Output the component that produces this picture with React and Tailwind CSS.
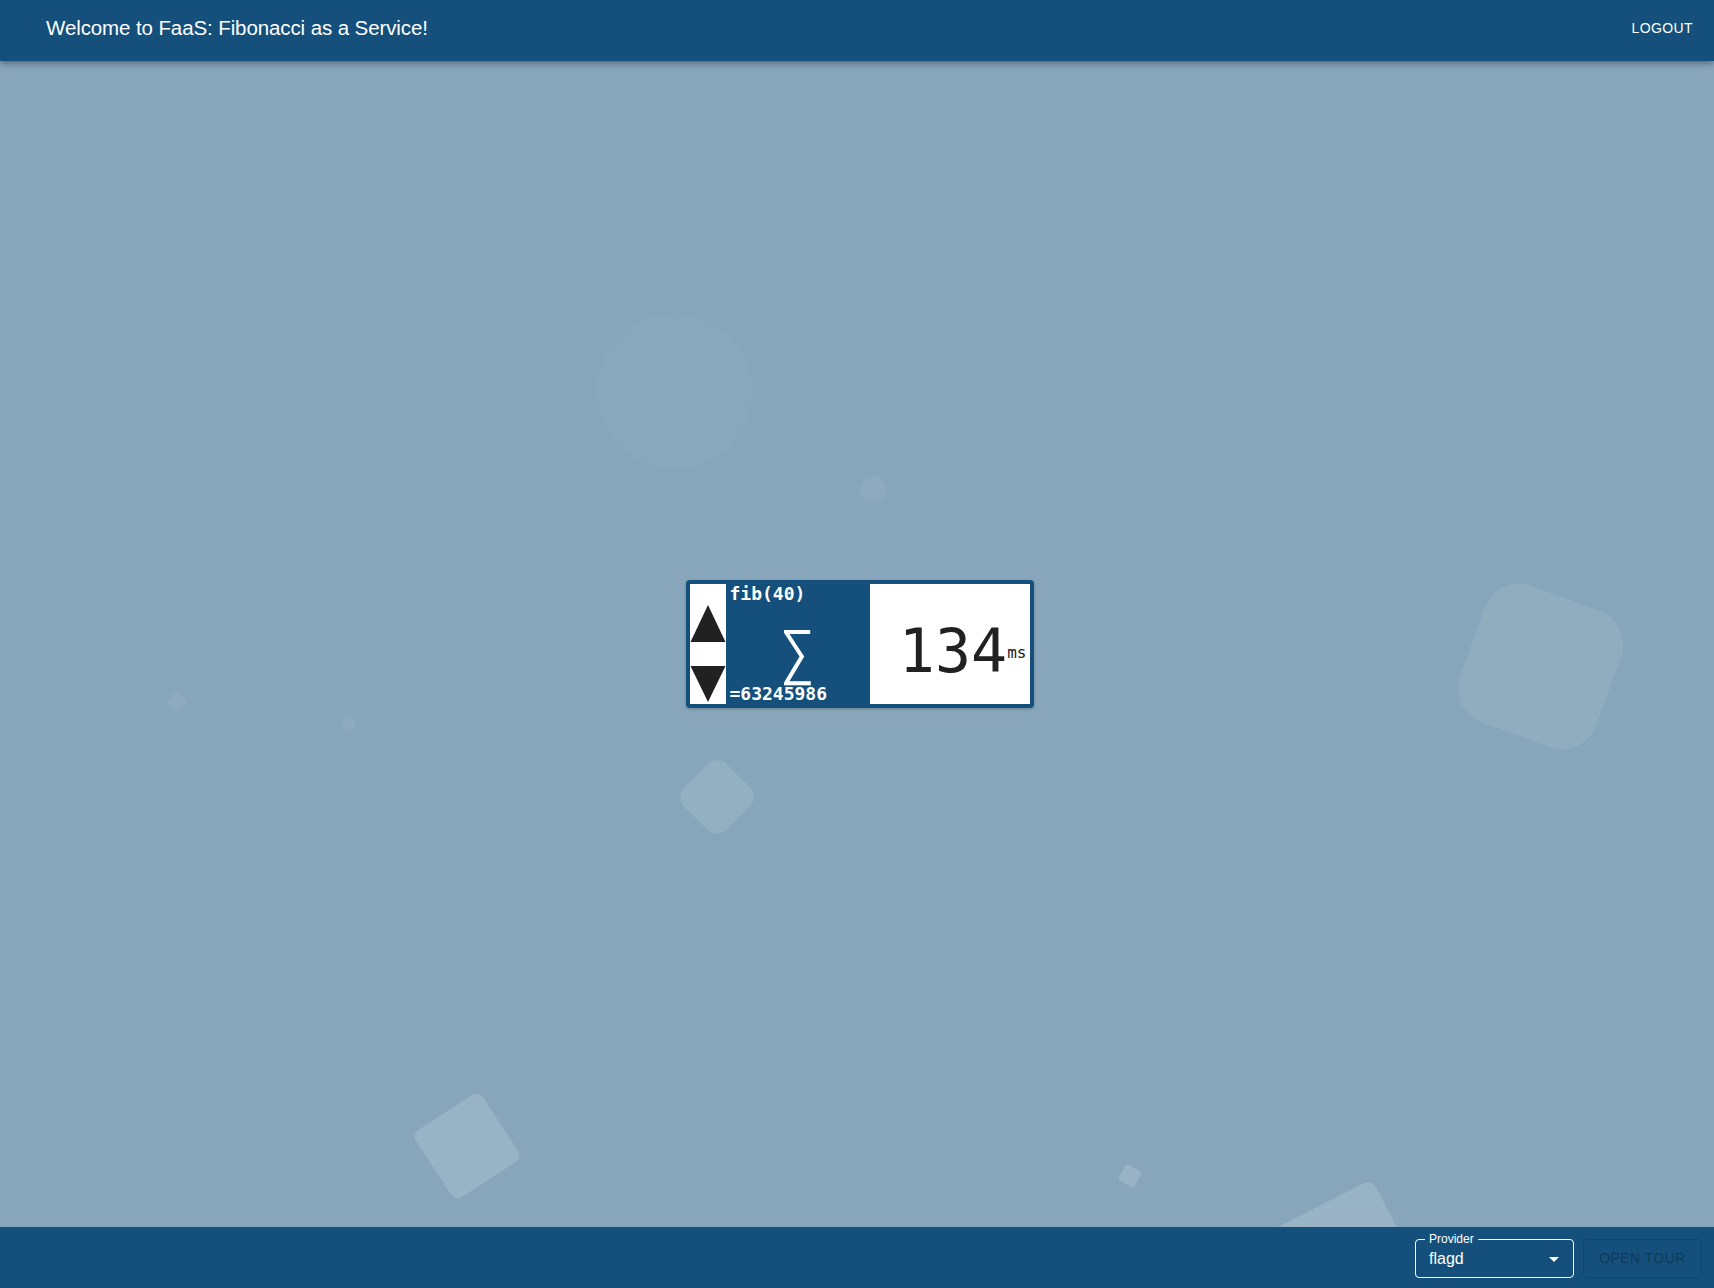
import React from "react";

const sans = { fontFamily: '"Liberation Sans", Arial, sans-serif' };
const mono = { fontFamily: '"DejaVu Sans Mono", "Liberation Mono", monospace' };

// faint floating shapes behind the content
const Shapes = () => (
  <div className="pointer-events-none absolute inset-0 overflow-hidden">
    <div className="absolute left-[597px] top-[314px] h-[155px] w-[155px] rounded-full bg-white/3"></div>
    <div className="absolute left-[860px] top-[476px] h-[26px] w-[26px] rounded-full bg-white/5"></div>
    <div className="absolute left-[1468px] top-[594px] h-[145px] w-[145px] rotate-[20deg] rounded-[36px] bg-white/8"></div>
    <div className="absolute left-[427px] top-[1106px] h-[80px] w-[80px] rotate-[-33deg] rounded-[8px] bg-white/15"></div>
    <div className="absolute left-[1121px] top-[1167px] h-[18px] w-[18px] rotate-[30deg] rounded-[3px] bg-white/15"></div>
    <div className="absolute left-[1214px] top-[1217px] h-[220px] w-[220px] rotate-[-27deg] rounded-[10px] bg-white/15"></div>
    <div className="absolute left-[169px] top-[694px] h-[16px] w-[16px] rotate-[45deg] rounded-[5px] bg-white/5"></div>
    <div className="absolute left-[343px] top-[717px] h-[12px] w-[12px] rotate-[30deg] rounded-[4px] bg-white/5"></div>
    <div className="absolute left-[687px] top-[767px] h-[60px] w-[60px] rotate-45 rounded-[14px] bg-white/10"></div>
  </div>
);

const Arrows = () => (
  <div className="flex w-9 flex-col items-center bg-white">
    <svg width="36" height="120" viewBox="0 0 36 120">
      <polygon points="18,21 35.5,58 0.5,58" fill="#212121" />
      <polygon points="0.5,82 35.5,82 18,118" fill="#212121" />
    </svg>
  </div>
);

const FibWidget = () => (
  <div className="ml-[5px] flex h-[128px] w-[348px] rounded-[4px] bg-[#14507b] p-1 shadow-[0_1px_3px_rgba(0,0,0,0.25)]" style={mono}>
    <Arrows />
    <div className="relative flex w-[144px] flex-col justify-between pl-[4px] text-white">
      <div className="text-[18px] font-bold leading-[20px]">fib(40)</div>
      <div className="absolute left-0 right-0 top-[39px] text-center text-[58px] leading-[60px]">∑</div>
      <div className="relative text-[18px] font-bold leading-[20px]">=63245986</div>
    </div>
    <div className="flex w-[160px] items-start justify-end bg-white pr-[3px] text-[#212121]">
      <span className="mt-[37px] text-[60px] leading-none">134</span>
      <span className="mt-[61px] text-[16px] leading-none">ms</span>
    </div>
  </div>
);

export default function App() {
  return (
    <div className="relative flex h-[1288px] w-full flex-col overflow-hidden bg-[#87a6bb]" style={sans}>
      <Shapes />

      <header className="relative z-10 flex h-[61px] items-center justify-between bg-[#14507b] pl-[46px] pr-[21px] text-white shadow-[0_2px_4px_-1px_rgba(0,0,0,0.2),0_4px_5px_0_rgba(0,0,0,0.14),0_1px_10px_0_rgba(0,0,0,0.12)]">
        <h1 className="-mt-[5px] text-[20.5px] font-normal tracking-[-0.1px]">Welcome to FaaS: Fibonacci as a Service!</h1>
        <button className="-mt-[5px] text-[14px] font-medium uppercase tracking-[0.4px]">Logout</button>
      </header>

      <main className="relative z-[1] flex flex-1 items-center justify-center">
        <FibWidget />
      </main>

      <footer className="relative z-10 flex h-[61px] items-center justify-end gap-[9px] bg-[#14507b] pr-[12px]">
        <div className="relative mt-[2px] flex h-[39px] w-[159px] items-center rounded-[4px] border border-white pl-[13px] pr-[7px] text-white">
          <span className="absolute -top-[9px] left-[9px] bg-[#14507b] px-[4px] text-[12px] leading-[16px]">Provider</span>
          <span className="flex-1 text-[16px]">flagd</span>
          <svg width="24" height="24" viewBox="0 0 24 24" fill="white">
            <path d="M7 10l5 5 5-5z" />
          </svg>
        </div>
        <button
          disabled
          className="mt-[2px] h-[39px] w-[119px] rounded-[4px] border border-black/10 text-[14px] font-medium uppercase tracking-[0.4px] text-black/30"
        >
          Open Tour
        </button>
      </footer>
    </div>
  );
}
